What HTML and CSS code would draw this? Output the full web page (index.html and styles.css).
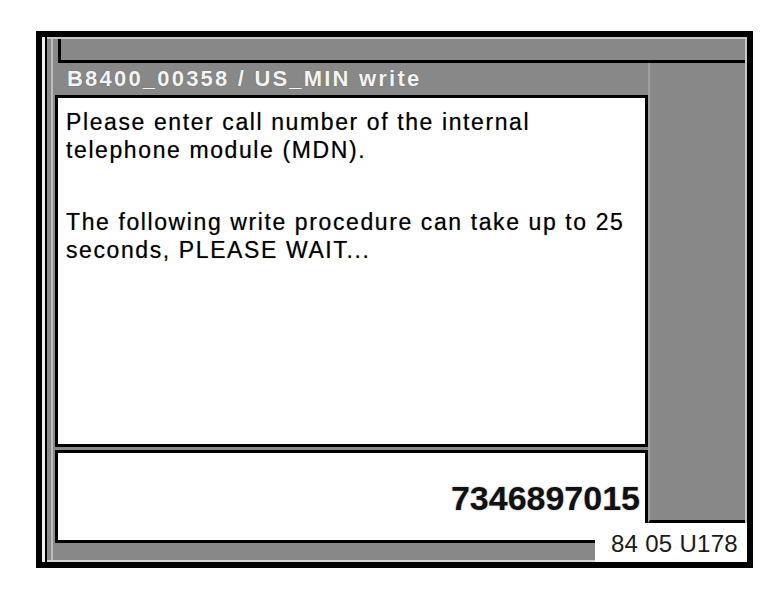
FILE: index.html
```html
<!DOCTYPE html>
<html>
<head>
<meta charset="utf-8">
<link rel="stylesheet" href="styles.css">
</head>
<body>
<div class="frame">
  <div class="win">
    <div class="topbar"></div>
    <div class="main">
      <div class="left">
        <div class="title">B8400_00358 / US_MIN write</div>
        <div class="msg">
          <p>Please enter call number of the internal<br>telephone module (MDN).</p>
          <p>The following write procedure can take up to 25<br>seconds, PLEASE WAIT...</p>
        </div>
        <div class="input"><span class="number">7346897015</span></div>
      </div>
      <div class="panel"></div>
    </div>
  </div>
  <div class="caption">84 05 U178</div>
</div>
</body>
</html>
```
FILE: styles.css
```css
* { box-sizing: border-box; }
html, body { margin: 0; background: #fff; }
body {
  padding: 31px 0 0 36px;
  font-family: "Liberation Sans", Arial, sans-serif;
}
.frame {
  position: relative;
  width: 717px;
  height: 537px;
  border: 6px solid #000;
  background: #f0f0f0;
  display: flex;
}
.win {
  flex: 1;
  margin-left: 3px;
  border-left: 2px solid #000;
  padding: 2px 2px 2px 8px;
  background: linear-gradient(to right, #888 0 4px, #bcbcbc 4px 6px, #888 6px 8px) no-repeat, #888;
  background-size: 8px 100%, auto;
  box-shadow: inset 0 2px #c6c6c6, inset -2px 0 #c6c6c6, inset 0 -2px #d6d6d6;
  display: flex;
  flex-direction: column;
}
.topbar {
  height: 24px;
  margin-left: 3px;
  border-left: 3px solid #000;
  border-bottom: 3px solid #000;
  background: #888;
}
.main {
  display: flex;
  align-items: flex-start;
}
.left {
  width: 593px;
}
.title {
  height: 32px;
  line-height: 32px;
  padding-left: 12px;
  color: #f4f4f4;
  font-weight: bold;
  font-size: 22px;
  letter-spacing: 2.2px;
  white-space: nowrap;
  text-shadow: 0 0 1px #555;
}
.msg {
  height: 352px;
  border: 3px solid #000;
  background: #fff;
  padding: 10px 8px 0;
}
.msg p {
  margin: 0;
  font-size: 23px;
  line-height: 28px;
  letter-spacing: 1.6px;
  color: #000;
  white-space: nowrap;
  text-shadow: 0 0 1px rgba(0, 0, 0, 0.45);
}
.msg p + p {
  margin-top: 44px;
}
.input {
  margin-top: 3px;
  height: 93px;
  border: 3px solid #000;
  background: #fff;
  display: flex;
  justify-content: flex-end;
  align-items: flex-end;
  padding: 0 5px 25px 0;
}
.number {
  font-size: 34px;
  line-height: 34px;
  font-weight: bold;
  color: #111;
  text-shadow: 0 0 2px rgba(0, 0, 0, 0.35);
}
.panel {
  flex: 1;
  height: 460px;
  border-left: 2px solid #a0a0a0;
  border-bottom: 3px solid #000;
  background: #888;
}
.caption {
  position: absolute;
  right: 0;
  bottom: 0;
  width: 152px;
  height: 39px;
  padding: 2px 9px 0 0;
  background: #fff;
  text-align: right;
  font-size: 24px;
  line-height: 37px;
  letter-spacing: 0.3px;
  color: #1a1a1a;
}
```
